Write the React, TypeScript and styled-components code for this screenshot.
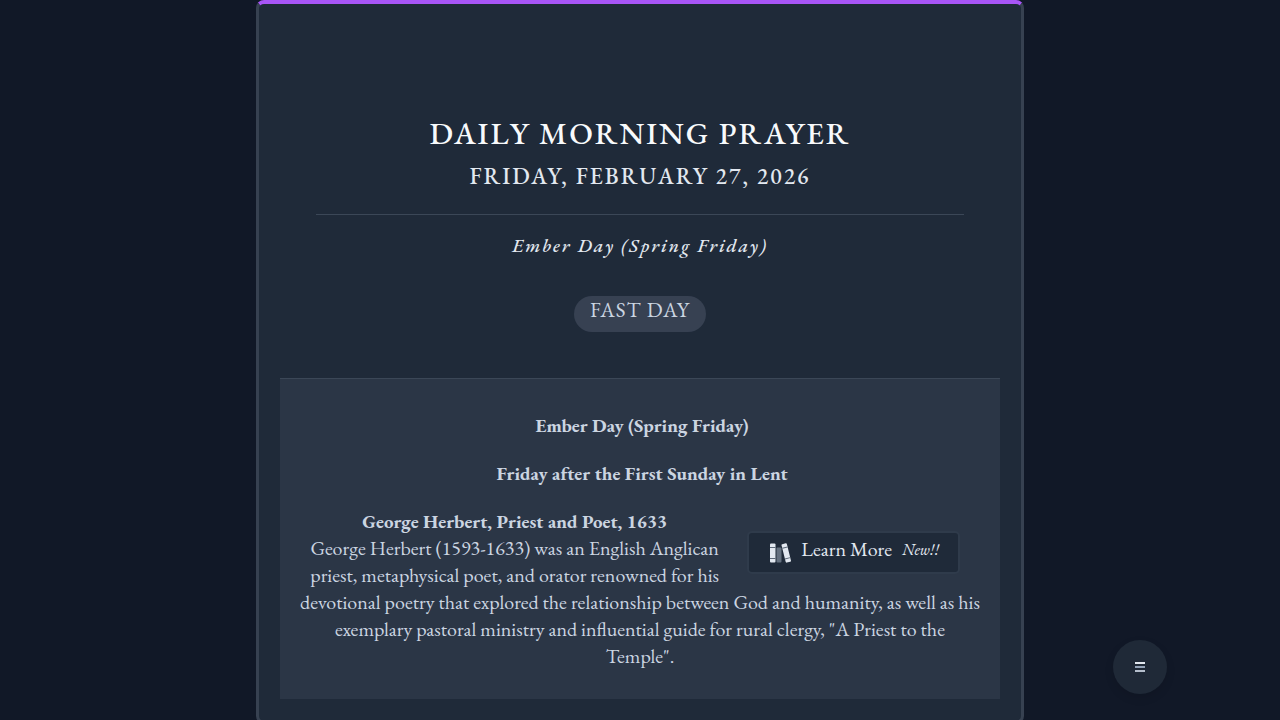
import React from "react";
import styled, { createGlobalStyle } from "styled-components";

const GlobalStyle = createGlobalStyle`
  * { box-sizing: border-box; }
  body {
    margin: 0;
    background: #111827;
    color: #cbd5e1;
    font-family: "EB Garamond", "Adobe Garamond Pro", "Liberation Serif", serif;
    font-size: 20px;
    line-height: 27px;
  }
`;

const Card = styled.main`
  max-width: 768px;
  min-height: 100vh;
  margin: 0 auto;
  padding: 111px 21px 22px;
  background: #1f2a39;
  border: 3px solid #374151;
  border-top: 4px solid #a855f7;
  border-radius: 8px;
`;

const Header = styled.header`
  display: flex;
  flex-direction: column;
  align-items: center;
  margin: 0 36px;
  text-align: center;
`;

const Title = styled.h1`
  margin: 0;
  color: #f8fafc;
  font-size: 31px;
  font-weight: 500;
  line-height: 36px;
  letter-spacing: 2px;
  text-transform: uppercase;
`;

const DateLine = styled.h2`
  align-self: stretch;
  margin: 0;
  padding: 9px 0 22px;
  border-bottom: 1px solid #3b4757;
  color: #e2e8f0;
  font-size: 23px;
  font-weight: 500;
  line-height: 32px;
  letter-spacing: 2px;
  text-transform: uppercase;
`;

const Feast = styled.h3`
  margin: 17px 0 0;
  color: #e2e8f0;
  font-size: 19px;
  font-style: italic;
  font-weight: 500;
  line-height: 28px;
  letter-spacing: 2px;
`;

const Badge = styled.span`
  margin: 36px 0 46px;
  padding: 0 16px 9px;
  border-radius: 18px;
  background: #374152;
  font-size: 21px;
  letter-spacing: 1px;
  text-transform: uppercase;
`;

const Panel = styled.section`
  padding: 33px 18px 29px;
  border-top: 1px solid #3b4757;
  background: #2b3646;
  text-align: center;
`;

const Observance = styled.h4`
  margin: 0 0 21px;
  padding-left: 4px;
  font-size: 19px;
  font-weight: 700;
`;

const Biography = styled.p`
  margin: 0;
`;

const Honoree = styled.strong`
  font-size: 19px;
`;

const LearnMore = styled.button`
  float: right;
  display: flex;
  align-items: center;
  height: 43px;
  margin: 23px 22px 15px 16px;
  padding: 0 19px 0 20px;
  border: 2px solid #2f3b4b;
  border-radius: 5px;
  background: #1f2a39;
  color: #e2e8f0;
  font: inherit;
  cursor: pointer;
`;

const LearnLabel = styled.span`
  margin-left: 10px;
  padding-bottom: 7px;
`;

const NewTag = styled.em`
  margin-left: 10px;
  padding-bottom: 6px;
  font-size: 16px;
  line-height: 20px;
`;

const BooksIcon = styled.svg`
  width: 22px;
  height: 20px;
`;

const MenuButton = styled.button`
  position: fixed;
  right: 113px;
  bottom: 26px;
  display: flex;
  align-items: center;
  justify-content: center;
  width: 54px;
  height: 54px;
  padding: 0;
  border: 0;
  border-radius: 50%;
  background: #1f2937;
  box-shadow: 0 4px 10px rgba(0, 0, 0, 0.1);
  cursor: pointer;
`;

const Books = () => (
  <BooksIcon viewBox="0 0 22 20" aria-hidden="true">
    <rect x="1" y="0.5" width="5.5" height="19" rx="1" fill="#e2e8f0" />
    <path d="M1 4.5h5.5M1 15.5h5.5" stroke="#5b6777" />
    <rect x="7.5" y="4.5" width="5" height="15" rx="1" fill="#64707f" />
    <g transform="rotate(-14 17 10)">
      <rect x="14.5" y="0.5" width="5.5" height="19" rx="1" fill="#e2e8f0" />
      <path d="M14.5 4.5h5.5M14.5 15.5h5.5" stroke="#5b6777" />
    </g>
  </BooksIcon>
);

export default function App() {
  return (
    <>
      <GlobalStyle />
      <Card>
        <Header>
          <Title>Daily Morning Prayer</Title>
          <DateLine>Friday, February 27, 2026</DateLine>
          <Feast>Ember Day (Spring Friday)</Feast>
          <Badge>Fast Day</Badge>
        </Header>
        <Panel>
          <Observance>Ember Day (Spring Friday)</Observance>
          <Observance>Friday after the First Sunday in Lent</Observance>
          <LearnMore type="button">
            <Books />
            <LearnLabel>Learn More</LearnLabel>
            <NewTag>New!!</NewTag>
          </LearnMore>
          <Biography>
            <Honoree>George Herbert, Priest and Poet, 1633</Honoree>
            <br />
            George Herbert (1593-1633) was an English Anglican priest, metaphysical poet, and orator
            renowned for his devotional poetry that explored the relationship between God and
            humanity, as well as his exemplary pastoral ministry and influential guide for rural
            clergy, "A Priest to the
            <br />
            Temple".
          </Biography>
        </Panel>
      </Card>
      <MenuButton type="button" aria-label="Menu">
        <svg width="10" height="10" viewBox="0 0 10 10" aria-hidden="true">
          <path d="M0 1h10" stroke="#e2e8f0" strokeWidth="2" />
          <path d="M0 5h10" stroke="#94a3b8" strokeWidth="2" />
          <path d="M0 9h10" stroke="#b4becb" strokeWidth="2" />
        </svg>
      </MenuButton>
    </>
  );
}
